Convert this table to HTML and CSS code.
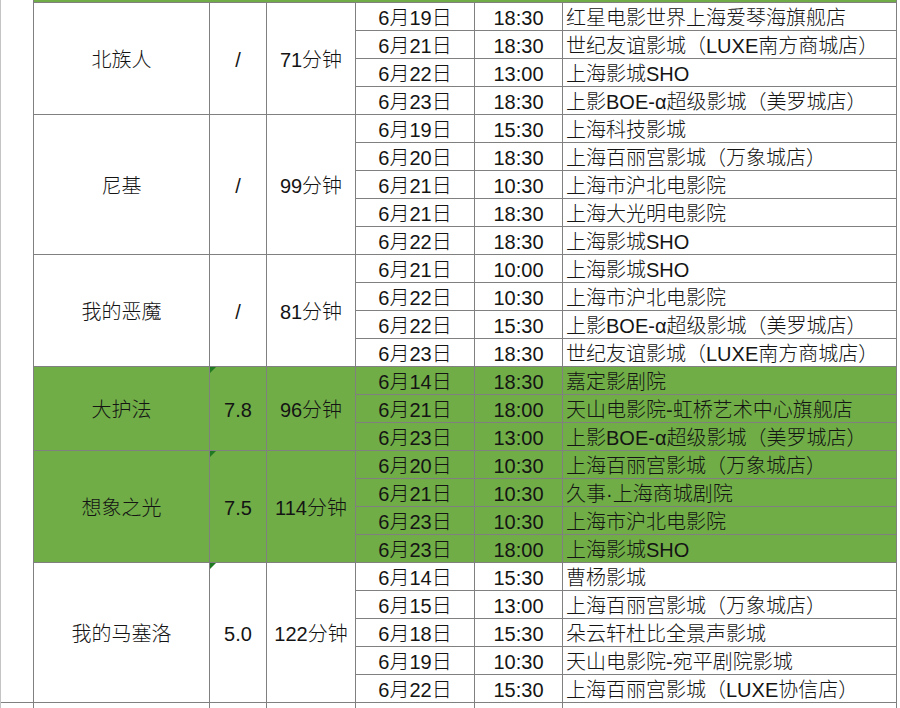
FILE: index.html
```html
<!DOCTYPE html>
<html lang="zh-CN">
<head>
<meta charset="utf-8">
<title>排片表</title>
<link rel="stylesheet" href="styles.css">
</head>
<body>
<div class="sheet">
  <div class="gutter top"></div>
  <div class="strip"></div>

  <div class="c title span4">北族人</div>
  <div class="c rate span4">/</div>
  <div class="c dur span4">71分钟</div>
  <div class="c date">6月19日</div><div class="c time">18:30</div><div class="c place">红星电影世界上海爱琴海旗舰店</div>
  <div class="c date">6月21日</div><div class="c time">18:30</div><div class="c place">世纪友谊影城（LUXE南方商城店）</div>
  <div class="c date">6月22日</div><div class="c time">13:00</div><div class="c place">上海影城SHO</div>
  <div class="c date">6月23日</div><div class="c time">18:30</div><div class="c place">上影BOE-α超级影城（美罗城店）</div>

  <div class="c title span5">尼基</div>
  <div class="c rate span5">/</div>
  <div class="c dur span5">99分钟</div>
  <div class="c date">6月19日</div><div class="c time">15:30</div><div class="c place">上海科技影城</div>
  <div class="c date">6月20日</div><div class="c time">18:30</div><div class="c place">上海百丽宫影城（万象城店）</div>
  <div class="c date">6月21日</div><div class="c time">10:30</div><div class="c place">上海市沪北电影院</div>
  <div class="c date">6月21日</div><div class="c time">18:30</div><div class="c place">上海大光明电影院</div>
  <div class="c date">6月22日</div><div class="c time">18:30</div><div class="c place">上海影城SHO</div>

  <div class="c title span4">我的恶魔</div>
  <div class="c rate span4">/</div>
  <div class="c dur span4">81分钟</div>
  <div class="c date">6月21日</div><div class="c time">10:00</div><div class="c place">上海影城SHO</div>
  <div class="c date">6月22日</div><div class="c time">10:30</div><div class="c place">上海市沪北电影院</div>
  <div class="c date">6月22日</div><div class="c time">15:30</div><div class="c place">上影BOE-α超级影城（美罗城店）</div>
  <div class="c date">6月23日</div><div class="c time">18:30</div><div class="c place">世纪友谊影城（LUXE南方商城店）</div>

  <div class="c title span3 hl">大护法</div>
  <div class="c rate span3 hl mark">7.8</div>
  <div class="c dur span3 hl">96分钟</div>
  <div class="c date hl">6月14日</div><div class="c time hl">18:30</div><div class="c place hl">嘉定影剧院</div>
  <div class="c date hl">6月21日</div><div class="c time hl">18:00</div><div class="c place hl">天山电影院-虹桥艺术中心旗舰店</div>
  <div class="c date hl">6月23日</div><div class="c time hl">13:00</div><div class="c place hl">上影BOE-α超级影城（美罗城店）</div>

  <div class="c title span4 hl">想象之光</div>
  <div class="c rate span4 hl mark">7.5</div>
  <div class="c dur span4 hl">114分钟</div>
  <div class="c date hl">6月20日</div><div class="c time hl">10:30</div><div class="c place hl">上海百丽宫影城（万象城店）</div>
  <div class="c date hl">6月21日</div><div class="c time hl">10:30</div><div class="c place hl">久事·上海商城剧院</div>
  <div class="c date hl">6月23日</div><div class="c time hl">10:30</div><div class="c place hl">上海市沪北电影院</div>
  <div class="c date hl">6月23日</div><div class="c time hl">18:00</div><div class="c place hl">上海影城SHO</div>

  <div class="c title span5">我的马塞洛</div>
  <div class="c rate span5 mark">5.0</div>
  <div class="c dur span5">122分钟</div>
  <div class="c date">6月14日</div><div class="c time">15:30</div><div class="c place">曹杨影城</div>
  <div class="c date">6月15日</div><div class="c time">13:00</div><div class="c place">上海百丽宫影城（万象城店）</div>
  <div class="c date">6月18日</div><div class="c time">15:30</div><div class="c place">朵云轩杜比全景声影城</div>
  <div class="c date">6月19日</div><div class="c time">10:30</div><div class="c place">天山电影院-宛平剧院影城</div>
  <div class="c date">6月22日</div><div class="c time">15:30</div><div class="c place">上海百丽宫影城（LUXE协信店）</div>

  <div class="gutter next"></div>
  <div class="c title"></div>
  <div class="c rate"></div>
  <div class="c dur"></div>
  <div class="c date"></div><div class="c time"></div><div class="c place"></div>
</div>
</body>
</html>
```

FILE: styles.css
```css
html, body {
  margin: 0;
  padding: 0;
  background: #ffffff;
  height: 708px;
  overflow: hidden;
}

.sheet {
  display: grid;
  grid-template-columns: 32px 175px 56px 88px 118px 87px 333px;
  grid-template-rows: 2px repeat(26, 27px);
  gap: 1px;
  width: 895px;
  background: #808080;
  border-left: 1px solid #c4c4c4;
  border-right: 1px solid #808080;
  font-family: "Liberation Sans", "Noto Sans CJK SC", sans-serif;
  font-size: 20px;
  font-weight: 300;
  color: #141414;
}

.gutter {
  grid-column: 1;
  background: #ffffff;
}

.gutter.top {
  grid-row: 1 / span 26;
}

.strip {
  grid-column: 2 / 8;
  grid-row: 1;
  background: #70ad47;
}

.c {
  background: #ffffff;
  display: flex;
  align-items: center;
  justify-content: center;
  padding-top: 3px;
  box-sizing: border-box;
  white-space: nowrap;
  overflow: hidden;
  line-height: 20px;
}

.c.hl {
  background: #70ad47;
}

.title { grid-column: 2; }
.rate { grid-column: 3; position: relative; }
.dur { grid-column: 4; }
.date { grid-column: 5; }
.time { grid-column: 6; }
.place {
  grid-column: 7;
  justify-content: flex-start;
  padding-left: 3px;
}

.span3 { grid-row: span 3; }
.span4 { grid-row: span 4; }
.span5 { grid-row: span 5; }

.mark::before {
  content: "";
  position: absolute;
  top: 0;
  left: 0;
  width: 0;
  height: 0;
  border-top: 6px solid #1f7a22;
  border-right: 6px solid transparent;
}
```
